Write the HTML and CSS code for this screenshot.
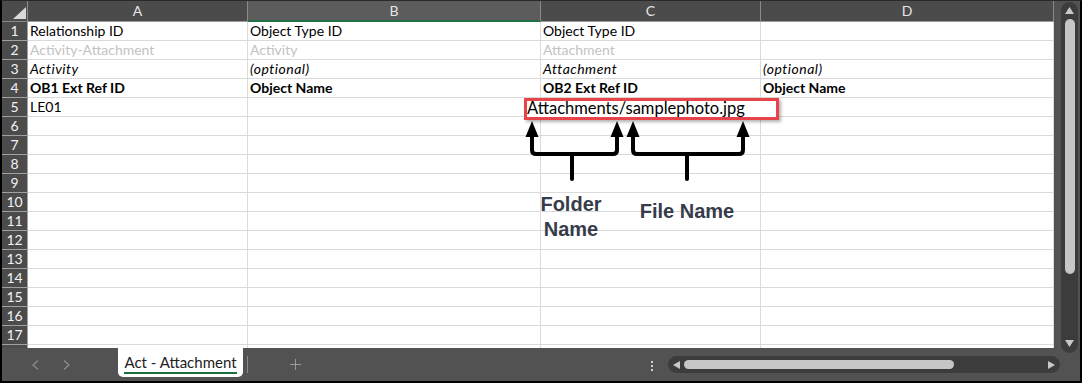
FILE: index.html
```html
<!DOCTYPE html>
<html>
<head>
<meta charset="utf-8">
<link rel="stylesheet" href="styles.css">
</head>
<body>
<div class="app">
  <div class="sheet">
    <div class="corner"><svg width="26" height="20" viewBox="0 0 26 20"><polygon points="11,18 24,18 24,6" fill="#d8d8d8"/></svg></div>
    <div class="ch">A</div>
    <div class="ch ch-sel">B</div>
    <div class="ch">C</div>
    <div class="ch">D</div>

    <div class="rh">1</div><div class="c">Relationship ID</div><div class="c">Object Type ID</div><div class="c">Object Type ID</div><div class="c"></div>
    <div class="rh">2</div><div class="c muted">Activity-Attachment</div><div class="c muted">Activity</div><div class="c muted">Attachment</div><div class="c"></div>
    <div class="rh">3</div><div class="c it">Activity</div><div class="c it">(optional)</div><div class="c it">Attachment</div><div class="c it">(optional)</div>
    <div class="rh">4</div><div class="c bd">OB1 Ext Ref ID</div><div class="c bd">Object Name</div><div class="c bd">OB2 Ext Ref ID</div><div class="c bd">Object Name</div>
    <div class="rh">5</div><div class="c">LE01</div><div class="c"></div><div class="c"></div><div class="c"></div>
    <div class="rh">6</div><div class="c"></div><div class="c"></div><div class="c"></div><div class="c"></div>
    <div class="rh">7</div><div class="c"></div><div class="c"></div><div class="c"></div><div class="c"></div>
    <div class="rh">8</div><div class="c"></div><div class="c"></div><div class="c"></div><div class="c"></div>
    <div class="rh">9</div><div class="c"></div><div class="c"></div><div class="c"></div><div class="c"></div>
    <div class="rh">10</div><div class="c"></div><div class="c"></div><div class="c"></div><div class="c"></div>
    <div class="rh">11</div><div class="c"></div><div class="c"></div><div class="c"></div><div class="c"></div>
    <div class="rh">12</div><div class="c"></div><div class="c"></div><div class="c"></div><div class="c"></div>
    <div class="rh">13</div><div class="c"></div><div class="c"></div><div class="c"></div><div class="c"></div>
    <div class="rh">14</div><div class="c"></div><div class="c"></div><div class="c"></div><div class="c"></div>
    <div class="rh">15</div><div class="c"></div><div class="c"></div><div class="c"></div><div class="c"></div>
    <div class="rh">16</div><div class="c"></div><div class="c"></div><div class="c"></div><div class="c"></div>
    <div class="rh">17</div><div class="c"></div><div class="c"></div><div class="c"></div><div class="c"></div>
    <div class="rh"></div><div class="c"></div><div class="c"></div><div class="c"></div><div class="c"></div>
  </div>

  <div class="vpane">
    <div class="vtrack">
      <svg class="vup" width="9" height="7" viewBox="0 0 9 7"><polygon points="4.5,0 9,7 0,7" fill="#c8c8c8"/></svg>
      <div class="vthumb"></div>
      <svg class="vdown" width="9" height="7" viewBox="0 0 9 7"><polygon points="0,0 9,0 4.5,7" fill="#c8c8c8"/></svg>
    </div>
  </div>

  <div class="tabbar">
    <div class="navbtn"><svg width="7" height="10" viewBox="0 0 7 10"><polyline points="6,0.5 1,5 6,9.5" fill="none" stroke="#8c8c8c" stroke-width="1.2"/></svg></div>
    <div class="navbtn"><svg width="7" height="10" viewBox="0 0 7 10"><polyline points="1,0.5 6,5 1,9.5" fill="none" stroke="#8c8c8c" stroke-width="1.2"/></svg></div>
    <div class="tab"><span class="tab-label">Act - Attachment</span></div>
    <div class="tabsep"></div>
    <div class="addbtn"><svg width="11" height="11" viewBox="0 0 11 11"><path d="M5.5 0V11M0 5.5H11" stroke="#9a9a9a" stroke-width="1"/></svg></div>
    <div class="spacer"></div>
    <div class="dots"><i></i><i></i><i></i></div>
    <div class="htrack">
      <svg class="hleft" width="7" height="8" viewBox="0 0 7 8"><polygon points="0,4 7,0 7,8" fill="#c8c8c8"/></svg>
      <div class="hthumb"></div>
      <div class="spacer"></div>
      <svg class="hright" width="7" height="8" viewBox="0 0 7 8"><polygon points="7,4 0,0 0,8" fill="#c8c8c8"/></svg>
    </div>
  </div>

  <div class="callout">Attachments/samplephoto.jpg</div>
  <svg class="arrows" width="240" height="70" viewBox="0 0 240 70">
    <g fill="none" stroke="#000" stroke-width="4" stroke-linecap="round" stroke-linejoin="round">
      <path d="M12 20 V35 Q12 39 16 39 H93 Q97 39 97 35 V20"/>
      <path d="M52 39 V64"/>
      <path d="M113 20 V35 Q113 39 117 39 H219 Q223 39 223 35 V20"/>
      <path d="M167 39 V64"/>
    </g>
    <g fill="#000">
      <polygon points="12,6 5.5,22 18.5,22"/>
      <polygon points="97,6 90.5,22 103.5,22"/>
      <polygon points="113,6 106.5,22 119.5,22"/>
      <polygon points="223,6 216.5,22 229.5,22"/>
    </g>
  </svg>
  <div class="label label-folder">Folder<br>Name</div>
  <div class="label label-file">File Name</div>
</div>
</body>
</html>
```

FILE: styles.css
```css
* { box-sizing: border-box; }
html, body { margin: 0; padding: 0; background: #000; }
.app {
  position: relative;
  width: 1082px;
  height: 383px;
  border-top: 1px solid #2a2a2a;
  border-left: 2px solid #000;
  border-right: 2px solid #000;
  border-bottom: 2px solid #000;
  display: grid;
  grid-template-columns: 1052px 26px;
  grid-template-rows: 347px 33px;
  background: #525252;
  font-family: Lato, "Liberation Sans", sans-serif;
}
.sheet {
  grid-column: 1;
  grid-row: 1;
  display: grid;
  grid-template-columns: 26px 220px 293px 220px 293px;
  grid-template-rows: 21px repeat(18, 19px);
  background: #fff;
  overflow: hidden;
  font-size: 14px;
}
.corner {
  background: #4b4b4b;
  border-right: 1px solid #8a8a8a;
  border-bottom: 1px solid #8a8a8a;
}
.corner svg { display: block; }
.ch {
  background: #4b4b4b;
  color: #e6e6e6;
  text-align: center;
  line-height: 20px;
  font-size: 14px;
  border-right: 1px solid #8a8a8a;
  border-bottom: 1px solid #9a9a9a;
}
.ch-sel {
  background: #5c5c5c;
  border-bottom: 2px solid #1e7145;
}
.rh {
  background: #4b4b4b;
  color: #f2f2f2;
  text-align: center;
  line-height: 18px;
  font-size: 14px;
  border-right: 1px solid #a0a0a0;
  border-bottom: 1px solid #a0a0a0;
}
.c {
  border-right: 1px solid #dadada;
  border-bottom: 1px solid #dadada;
  padding-left: 2px;
  line-height: 18px;
  color: #000;
  white-space: nowrap;
  overflow: hidden;
}
.muted { color: #c3c3c3; }
.it { font-style: italic; letter-spacing: 0.5px; }
.bd { font-weight: bold; }

.vpane {
  grid-column: 2;
  grid-row: 1;
  padding: 1px 2px 0 7px;
}
.vtrack {
  position: relative;
  z-index: 1;
  width: 17px;
  height: 351px;
  background: #3c3c3c;
  border-radius: 9px;
  display: flex;
  flex-direction: column;
  align-items: center;
}
.vup { margin-top: 5px; display: block; }
.vthumb {
  margin-top: 5px;
  width: 10px;
  height: 255px;
  background: #c6c6c6;
  border-radius: 5px;
}
.vdown { margin-top: 66px; display: block; }

.tabbar {
  grid-column: 1 / 3;
  grid-row: 2;
  display: flex;
  align-items: flex-start;
  background: #525252;
}
.navbtn {
  width: 31px;
  height: 33px;
  display: flex;
  align-items: center;
  justify-content: center;
}
.navbtn:first-child { margin-left: 18px; }
.navbtn svg { display: block; }
.tab {
  margin-left: 36px;
  width: 125px;
  height: 29px;
  background: #fff;
  border-radius: 0 0 5px 5px;
  display: flex;
  justify-content: center;
  padding-top: 5px;
}
.tab-label {
  font-size: 15px;
  line-height: 18px;
  color: #222;
  border-bottom: 2px solid #1b6e3d;
  padding-bottom: 1px;
  height: 21px;
}
.tabsep {
  margin-left: 4px;
  margin-top: 8px;
  width: 1px;
  height: 17px;
  background: #8a8a8a;
}
.addbtn {
  margin-left: 37px;
  width: 21px;
  height: 33px;
  display: flex;
  align-items: center;
  justify-content: center;
}
.addbtn svg { display: block; }
.spacer { flex: 1; }
.dots {
  width: 3px;
  margin-top: 13px;
  display: flex;
  flex-direction: column;
  gap: 2px;
}
.dots i {
  display: block;
  width: 2px;
  height: 2px;
  background: #d0d0d0;
}
.htrack {
  margin-left: 14px;
  margin-right: 20px;
  margin-top: 8px;
  width: 392px;
  height: 17px;
  background: #3c3c3c;
  border-radius: 9px;
  display: flex;
  align-items: center;
  padding: 0 5px 0 5px;
}
.hleft, .hright { display: block; }
.hthumb {
  margin-left: 4px;
  width: 270px;
  height: 9px;
  background: #c6c6c6;
  border-radius: 5px;
}

.callout {
  position: absolute;
  left: 522px;
  top: 97px;
  width: 255px;
  height: 22px;
  border: 3px solid #e8424a;
  background: #fff;
  box-shadow: 2px 2px 3px rgba(0,0,0,0.3);
  font-size: 16.5px;
  line-height: 15px;
  padding-left: 0;
  color: #000;
  white-space: nowrap;
  overflow: hidden;
}
.arrows {
  position: absolute;
  left: 518px;
  top: 114px;
}
.label {
  position: absolute;
  font-family: "Liberation Sans", Arial, sans-serif;
  font-weight: bold;
  font-size: 20px;
  line-height: 25px;
  color: #363c4a;
  text-align: center;
}
.label-folder { left: 519px; top: 191px; width: 100px; }
.label-file { left: 615px; top: 198px; width: 140px; }
```
